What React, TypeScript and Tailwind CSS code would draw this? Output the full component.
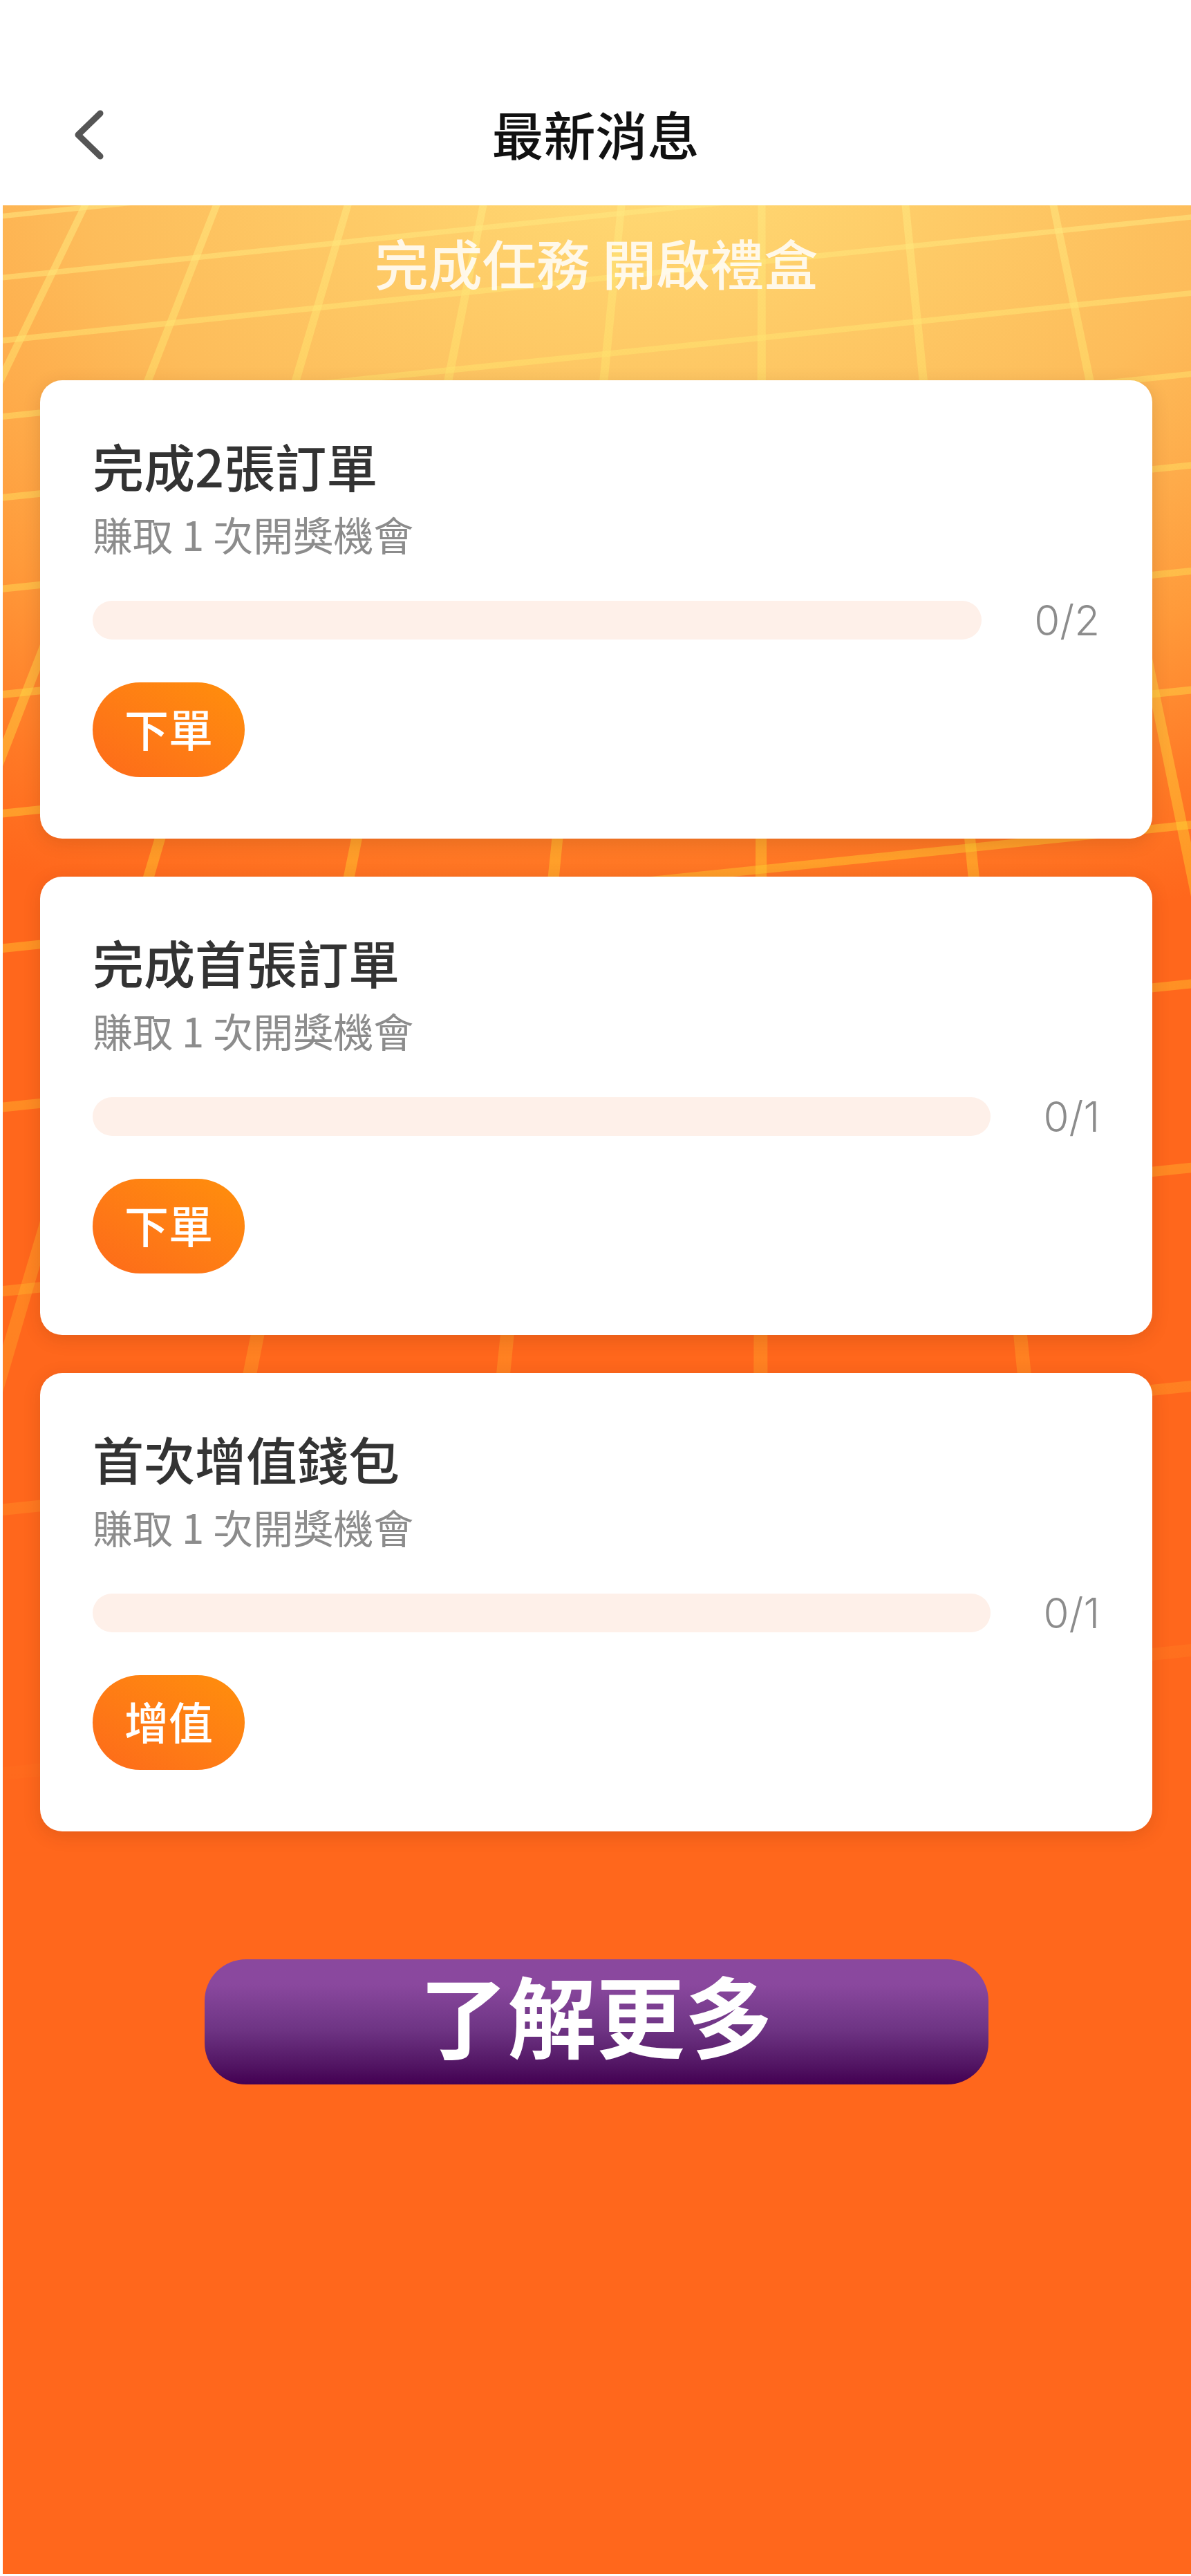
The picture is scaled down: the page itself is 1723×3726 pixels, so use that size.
const FONT = `font-['Noto_Sans_CJK_TC','Noto_Sans',sans-serif]`;

// grid drawn over the gradient: lines run to a vanishing point above the page
const VERTICAL_TOPS = [123, 313, 503, 699, 899, 1102, 1310, 1524];
const HORIZONTAL_LEFTS = [313, 402, 493, 603, 720, 852, 1005, 1177, 1372, 1602, 1868, 2184, 2566];

function verticalLine(top: number) {
  const at = (y: number) => 1104 + ((top - 1104) * (y + 1730)) / 2027;
  const width = (y: number) => (y + 1730) * 0.0054;
  const a = 297;
  const b = 2660;
  return `${at(a) - width(a) / 2},${a} ${at(a) + width(a) / 2},${a} ${at(b) + width(b) / 2},${b} ${at(b) - width(b) / 2},${b}`;
}

function horizontalLine(left: number) {
  const right = left - 179;
  const tl = 6 + left * 0.005;
  const tr = 6 + right * 0.005;
  return `0,${left - tl / 2} 1723,${right - tr / 2} 1723,${right + tr / 2} 0,${left + tl / 2}`;
}

function GridLines() {
  return (
    <svg className="absolute left-[-4px] top-0 w-[1723px] h-[3426px]" viewBox="0 297 1723 3426" fill="none">
      <defs>
        <linearGradient id="gridFill" gradientUnits="userSpaceOnUse" x1="0" y1="297" x2="0" y2="2660">
          <stop offset="0" stopColor="#ffe880" stopOpacity="0.55" />
          <stop offset="0.4" stopColor="#ffd030" stopOpacity="0.45" />
          <stop offset="0.72" stopColor="#ffc030" stopOpacity="0.28" />
          <stop offset="0.9" stopColor="#ffc030" stopOpacity="0.08" />
          <stop offset="1" stopColor="#ffc030" stopOpacity="0" />
        </linearGradient>
      </defs>
      {VERTICAL_TOPS.map((top) => (
        <polygon key={top} points={verticalLine(top)} fill="url(#gridFill)" />
      ))}
      {HORIZONTAL_LEFTS.map((left) => (
        <polygon key={left} points={horizontalLine(left)} fill="url(#gridFill)" />
      ))}
    </svg>
  );
}

type Task = { title: string; total: number; action: string };

const TASKS: Task[] = [
  { title: '完成2張訂單', total: 2, action: '下單' },
  { title: '完成首張訂單', total: 1, action: '下單' },
  { title: '首次增值錢包', total: 1, action: '增值' },
];

function TaskCard({ task }: { task: Task }) {
  return (
    <div className="bg-white rounded-[32px] shadow-[0_6px_26px_rgba(90,40,0,0.16)] px-[76px] pt-[83px] pb-[89px]">
      <h2 className="text-[74px] leading-[80px] font-medium text-[#333333]">{task.title}</h2>
      <p className="mt-[29px] text-[58px] leading-[60px] text-[#8c8c8c]">賺取 1 次開獎機會</p>
      <div className="mt-[67px] flex items-center gap-[76px]">
        <div className="flex-1 h-[56px] rounded-full bg-[#fef0e9]" />
        <span className="font-['Inter',sans-serif] text-[60px] leading-[56px] font-light text-[#8c8c8c]">0/{task.total}</span>
      </div>
      <button className="mt-[62px] block w-[220px] h-[137px] pb-[8px] rounded-full bg-linear-to-tr from-[#fd6a1a] to-[#ff8f0b] text-[64px] font-medium text-white">
        {task.action}
      </button>
    </div>
  );
}

export default function App() {
  return (
    <div className={`${FONT} flex flex-col h-[3726px] bg-white`}>
      {/* Header */}
      <div className="h-[297px] pt-[147px] px-[108px] flex items-start">
        <svg className="w-[42px] h-[96px] shrink-0" viewBox="0 0 42 96" fill="none">
          <polyline points="37,17 5,48 37,79" stroke="#555555" strokeWidth="9" strokeLinecap="round" strokeLinejoin="round" />
        </svg>
        <h1 className="flex-1 text-center text-[75px] leading-[92px] font-medium text-[#111111]">最新消息</h1>
        <div className="w-[42px] shrink-0" />
      </div>

      {/* Orange area */}
      <div className="relative overflow-hidden ml-[4px] h-[3426px] bg-[radial-gradient(ellipse_2000px_1150px_at_940px_-60px,#ffdb75_0%,#fdbc5a_42%,#ff9a3a_68%,#ff7a26_86%,#ff671c_100%)] bg-[#ff671c]">
        <GridLines />
        <div className="relative flex flex-col pl-[54px] pr-[56px]">
          <div className="h-[253px] pt-[44px] text-center text-[78px] leading-[76px] font-medium text-white/85">
            完成任務 開啟禮盒
          </div>
          <div className="flex flex-col gap-[55px]">
            {TASKS.map((task) => (
              <TaskCard key={task.title} task={task} />
            ))}
          </div>
          <button className="self-center mt-[185px] w-[1134px] h-[181px] pb-[24px] rounded-[60px] bg-linear-to-b from-[#8a489e] from-20% via-[#6f3585] via-55% to-[#430052] text-[128px] leading-[128px] font-bold text-white">
            了解更多
          </button>
        </div>
      </div>
    </div>
  );
}
